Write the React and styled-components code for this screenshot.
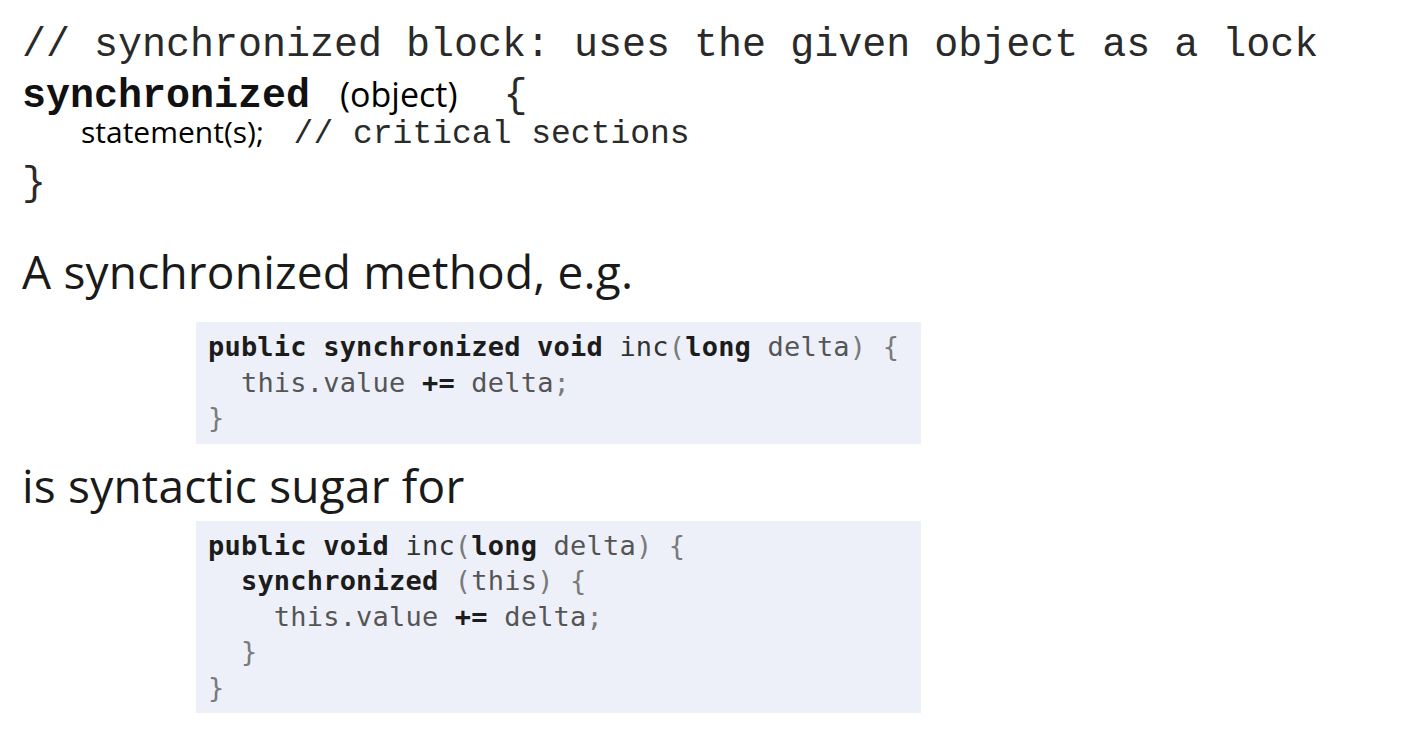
import React from 'react';
import styled, { createGlobalStyle } from 'styled-components';

const GlobalStyle = createGlobalStyle`
  html, body {
    margin: 0;
    padding: 0;
    background: #ffffff;
  }
  body {
    font-family: "Open Sans", sans-serif;
    color: #111;
  }
`;

const Slide = styled.div`
  width: 1419px;
  height: 746px;
  padding: 22px 0 0 22px;
  box-sizing: border-box;
  overflow: hidden;
`;

// Top snippet: mixed Courier / Calibri, like a pasted slide
const Snippet = styled.div`
  display: flex;
  flex-direction: column;
`;

const Line = styled.div`
  display: flex;
  align-items: baseline;
  white-space: pre;
  line-height: 1;
  height: ${p => p.$h}px;
  padding-top: ${p => p.$pt || 0}px;
  padding-left: ${p => p.$indent || 0}px;
  box-sizing: border-box;
`;

const Mono = styled.span`
  font-family: "Liberation Mono", "Courier New", monospace;
  font-size: ${p => p.$size || 40}px;
  font-weight: ${p => (p.$bold ? 700 : 400)};
  color: ${p => (p.$bold ? '#111' : '#2a2a2a')};
  margin-left: ${p => p.$ml || 0}px;
`;

const Sans = styled.span`
  font-family: "Open Sans", sans-serif;
  font-size: ${p => p.$size || 34}px;
  color: #000;
  margin-left: ${p => p.$ml || 0}px;
`;

const Heading = styled.div`
  font-family: "Open Sans", sans-serif;
  font-size: 46px;
  letter-spacing: 0.2px;
  color: #1a1a1a;
  line-height: 1;
  margin-top: ${p => p.$mt}px;
  height: ${p => p.$h}px;
`;

const CodeBox = styled.pre`
  margin: 0 0 0 174px;
  width: 725px;
  box-sizing: border-box;
  padding: 7px 12px 8px;
  background: #edf0f8;
  font-family: "DejaVu Sans Mono", "Liberation Mono", monospace;
  font-size: 27px;
  line-height: 35.5px;
  letter-spacing: 0.2px;
  color: #555;
`;

const Kw = styled.span`
  font-weight: 700;
  color: #1c1c1c;
`;

const Id = styled.span`
  color: #333;
`;

const P = styled.span`
  color: #7a7a7a;
`;

export default function App() {
  return (
    <>
      <GlobalStyle />
      <Slide>
        <Snippet>
          <Line $h={55} $pt={4}>
            <Mono>// synchronized block: uses the given object as a lock</Mono>
          </Line>
          <Line $h={40}>
            <Mono $bold>synchronized</Mono>
            <Mono> </Mono>
            <Sans $ml={6}>(object)</Sans>
            <Mono $ml={-2}>  {'{'}</Mono>
          </Line>
          <Line $h={48} $indent={59}>
            <Sans $size={30}>statement(s);</Sans>
            <Mono $size={33} $ml={10}> // critical sections</Mono>
          </Line>
          <Line $h={40}>
            <Mono>{'}'}</Mono>
          </Line>
        </Snippet>

        <Heading $mt={43} $h={74}>A synchronized method, e.g.</Heading>
        <CodeBox>
          <Kw>public synchronized void</Kw> <Id>inc</Id><P>(</P><Kw>long</Kw> delta<P>)</P> <P>{'{'}</P>{'\n'}
          {'  '}this.value <Kw>+=</Kw> delta<P>;</P>{'\n'}
          <P>{'}'}</P>
        </CodeBox>

        <Heading $mt={18} $h={59}>is syntactic sugar for</Heading>
        <CodeBox>
          <Kw>public void</Kw> <Id>inc</Id><P>(</P><Kw>long</Kw> delta<P>)</P> <P>{'{'}</P>{'\n'}
          {'  '}<Kw>synchronized</Kw> <P>(</P>this<P>)</P> <P>{'{'}</P>{'\n'}
          {'    '}this.value <Kw>+=</Kw> delta<P>;</P>{'\n'}
          {'  '}<P>{'}'}</P>{'\n'}
          <P>{'}'}</P>
        </CodeBox>
      </Slide>
    </>
  );
}
